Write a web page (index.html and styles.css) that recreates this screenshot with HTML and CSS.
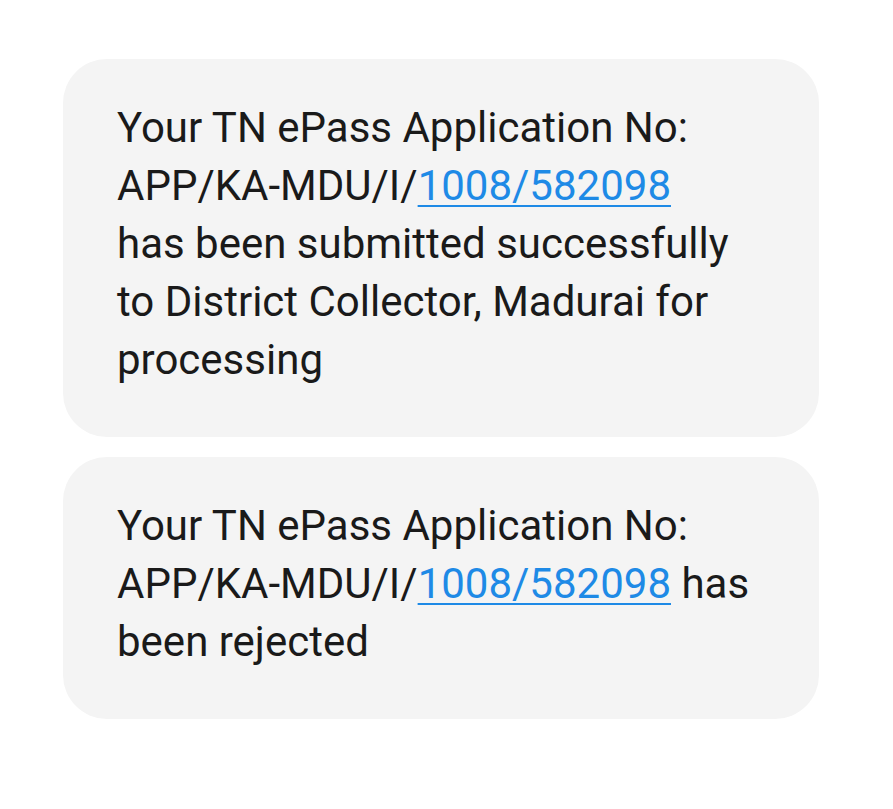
FILE: index.html
```html
<!DOCTYPE html>
<html>
<head>
<meta charset="utf-8">
<link rel="stylesheet" href="styles.css">
</head>
<body>
<div class="thread">
  <div class="bubble">Your TN ePass Application No: APP/KA-MDU/I/<a class="link">1008/582098</a><br>has been submitted successfully to District Collector, Madurai for processing</div>
  <div class="bubble">Your TN ePass Application No: APP/KA-MDU/I/<a class="link">1008/582098</a> has been rejected</div>
</div>
</body>
</html>
```
FILE: styles.css
```css
html, body {
  margin: 0;
  padding: 0;
  background: #ffffff;
}
.thread {
  display: flex;
  flex-direction: column;
  gap: 20px;
  padding: 59px 0 0 63px;
  width: 756px;
}
.bubble {
  background: #f4f4f4;
  border-radius: 44px;
  padding: 40px 54px 48px 54px;
  font-family: Roboto, "Noto Sans", sans-serif;
  font-size: 42px;
  line-height: 58px;
  color: #1a1a1a;
}
.link {
  color: #1e8ae6;
  text-decoration: underline;
  text-decoration-thickness: 2px;
  text-underline-offset: 5px;
}
```
